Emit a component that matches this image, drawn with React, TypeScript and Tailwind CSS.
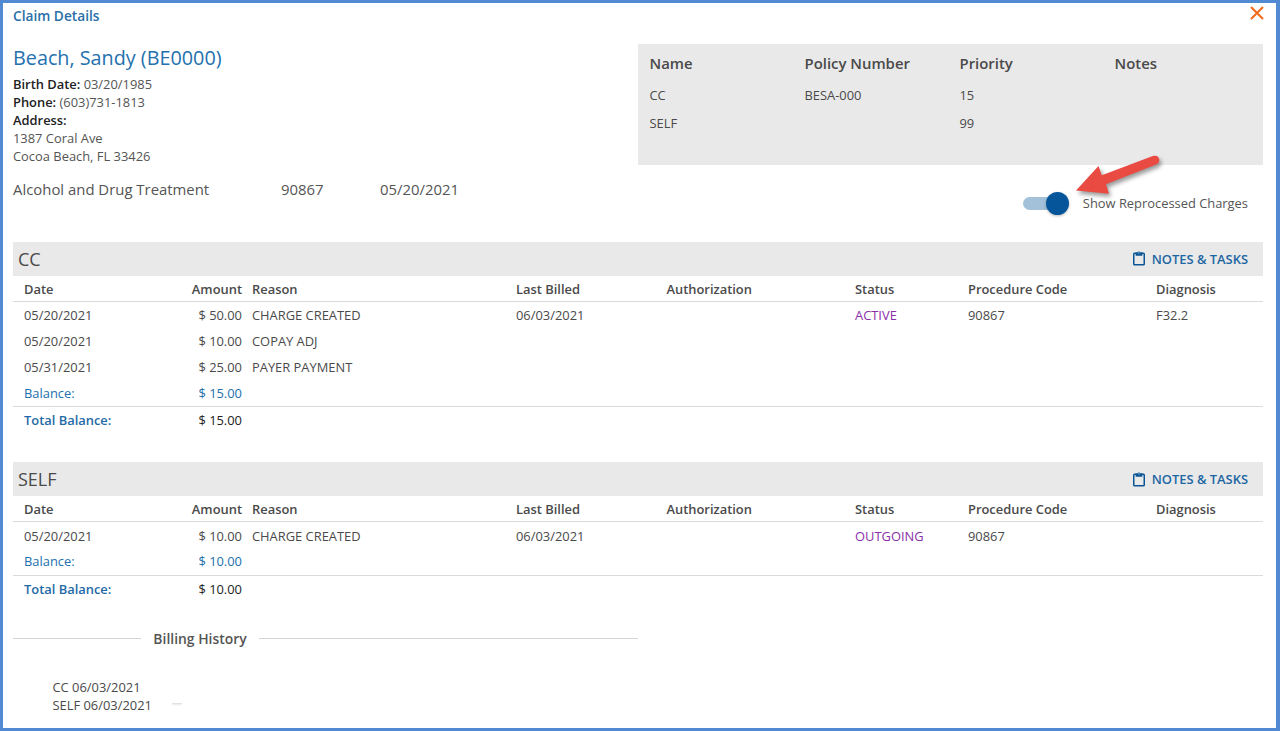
import React from "react";

type Row = {
  date: string;
  amount: string;
  reason: string;
  billed?: string;
  status?: string;
  code?: string;
  diagnosis?: string;
};

const grid =
  "grid grid-cols-[145.5px_72.5px_10px_264px_150.5px_188.5px_113px_188px_95px] pl-[11px] whitespace-nowrap items-center";

function ClipboardIcon() {
  return (
    <svg width="12" height="15" viewBox="0 0 12 15" fill="none">
      <rect x="0.75" y="2.2" width="10.5" height="11.6" rx="0.8" stroke="#0b5597" strokeWidth="1.5" />
      <path d="M2.6 1.5H4.6A1.45 1.4 0 0 1 7.4 1.5H9.4V4.8H2.6Z" fill="#0b5597" />
      <circle cx="6" cy="1.9" r="0.6" fill="#e9e9e9" />
    </svg>
  );
}

function Section({ title, rows, balance }: { title: string; rows: Row[]; balance: string }) {
  return (
    <section className="text-[12.9px] text-[#4a4a4a]">
      <div className="flex h-[34px] items-center justify-between bg-[#e9e9e9] pl-[5px] pr-[15px]">
        <h2 className="text-[18px]">{title}</h2>
        <button className="flex items-center gap-[7px] text-[12.9px] font-semibold text-[#1c66a3]">
          <ClipboardIcon />
          <span className="pt-px">NOTES &amp; TASKS</span>
        </button>
      </div>
      <div className={`${grid} h-[26px] border-b border-[#dadada] pt-[2px] font-semibold`}>
        <span>Date</span>
        <span className="justify-self-end">Amount</span>
        <span className="col-start-4">Reason</span>
        <span>Last Billed</span>
        <span>Authorization</span>
        <span>Status</span>
        <span>Procedure Code</span>
        <span>Diagnosis</span>
      </div>
      <div className="border-b border-[#dadada] pt-px">
        {rows.map((r, i) => (
          <div key={i} className={`${grid} h-[25.8px]`}>
            <span>{r.date}</span>
            <span className="text-right">{r.amount}</span>
            <span className="col-start-4">{r.reason}</span>
            <span>{r.billed}</span>
            <span />
            <span className="text-[#8a2fa8]">{r.status}</span>
            <span>{r.code}</span>
            <span>{r.diagnosis}</span>
          </div>
        ))}
        <div className={`${grid} h-[25.6px] text-[#2270ad]`}>
          <span>Balance:</span>
          <span className="text-right">{balance}</span>
        </div>
      </div>
      <div className={`${grid} h-[27px] font-semibold`}>
        <span className="text-[#1f6aa6]">Total Balance:</span>
        <span className="text-right font-medium text-[#222]">{balance}</span>
      </div>
    </section>
  );
}

const charge = { date: "05/20/2021", reason: "CHARGE CREATED", billed: "06/03/2021", code: "90867" };

export default function App() {
  return (
    <main className="relative h-[731px] w-[1280px] overflow-hidden border-[3px] border-r-4 border-[#5289d3] bg-white pl-[10px] pr-[13px] font-['Open_Sans','Noto_Sans',sans-serif] text-[12.9px] text-[#555]">
      <header className="flex h-[41px] items-start justify-between pt-[3px]">
        <h1 className="text-[13.7px] leading-5 font-semibold text-[#2a6fa8]">Claim Details</h1>
        <button aria-label="Close" className="-mr-px">
          <svg width="14" height="14" viewBox="0 0 14 14">
            <path d="M1 1L13 13M13 1L1 13" stroke="#f26a1b" strokeWidth="2.1" />
          </svg>
        </button>
      </header>
      <div className="flex h-[198px] justify-between">
        <div>
          <h2 className="text-[19.8px] leading-[27px] text-[#2471ae]">Beach, Sandy (BE0000)</h2>
          <div className="mt-[5px] leading-[17.9px]">
            <p><b className="font-semibold text-[#222]">Birth Date:</b> 03/20/1985</p>
            <p><b className="font-semibold text-[#222]">Phone:</b> (603)731-1813</p>
            <p><b className="font-semibold text-[#222]">Address:</b></p>
            <p>1387 Coral Ave</p>
            <p>Cocoa Beach, FL 33426</p>
          </div>
          <div className="mt-[13.5px] grid grid-cols-[268px_99px_100px] text-[14.9px] leading-[21px]">
            <span>Alcohol and Drug Treatment</span>
            <span>90867</span>
            <span>05/20/2021</span>
          </div>
        </div>
        <div className="w-[625px]">
          <div className="h-[121px] bg-[#e9e9e9] pt-[8px] pl-[11.5px] text-[#4a4a4a]">
            <div className="grid h-[29px] grid-cols-[155px_155px_155px_140px] text-[14.9px] leading-[22px] font-semibold">
              <span>Name</span>
              <span>Policy Number</span>
              <span>Priority</span>
              <span>Notes</span>
            </div>
            <div className="grid grid-cols-[155px_155px_155px_140px] leading-7">
              <span>CC</span>
              <span>BESA-000</span>
              <span>15</span>
              <span />
              <span>SELF</span>
              <span />
              <span>99</span>
            </div>
          </div>
          <div className="flex h-[77px] items-center justify-end pr-[15px]">
            <div className="flex items-center gap-[14px]">
              <span role="switch" aria-checked="true" className="flex h-[13px] w-[46px] items-center justify-end rounded-full bg-[#a3c2d9]">
                <span className="size-[23px] rounded-full bg-[#04559a] shadow-[0_1px_3px_#0004]" />
              </span>
              <span className="pt-px">Show Reprocessed Charges</span>
            </div>
          </div>
        </div>
      </div>
      <Section
        title="CC"
        balance="$ 15.00"
        rows={[
          { ...charge, amount: "$ 50.00", status: "ACTIVE", diagnosis: "F32.2" },
          { date: "05/20/2021", amount: "$ 10.00", reason: "COPAY ADJ" },
          { date: "05/31/2021", amount: "$ 25.00", reason: "PAYER PAYMENT" },
        ]}
      />
      <div className="h-[28.4px]" />
      <Section title="SELF" balance="$ 10.00" rows={[{ ...charge, amount: "$ 10.00", status: "OUTGOING" }]} />
      <div className="mt-[25.2px] flex h-[22px] w-[625px] items-center text-[13.9px] font-semibold">
        <span className="h-px w-[128px] bg-[#d5d5d5]" />
        <h3 className="w-[118px] pt-px text-center">Billing History</h3>
        <span className="h-px grow bg-[#d5d5d5]" />
      </div>
      <div className="mt-[28.4px] flex pl-[39.5px] leading-[18px]">
        <div className="w-[119px] text-[#4a4a4a]">
          <p>CC 06/03/2021</p>
          <p>SELF 06/03/2021</p>
        </div>
        <span className="mt-[25px] h-[3px] w-[10px] rounded-b-full bg-linear-to-b from-[#ddd] to-white" />
      </div>
      <svg className="absolute top-[145px] left-[1065px] drop-shadow-[2px_3px_2px_#0006]" width="100" height="60" viewBox="1068 148 100 60">
        <path d="M1076 190.5L1098.5 166L1101.8 175.2L1152.8 156.1C1159 153.8 1162 161.8 1156.2 164.6L1106 184.3L1109 193.8Z" fill="#e94b43" />
      </svg>
    </main>
  );
}
